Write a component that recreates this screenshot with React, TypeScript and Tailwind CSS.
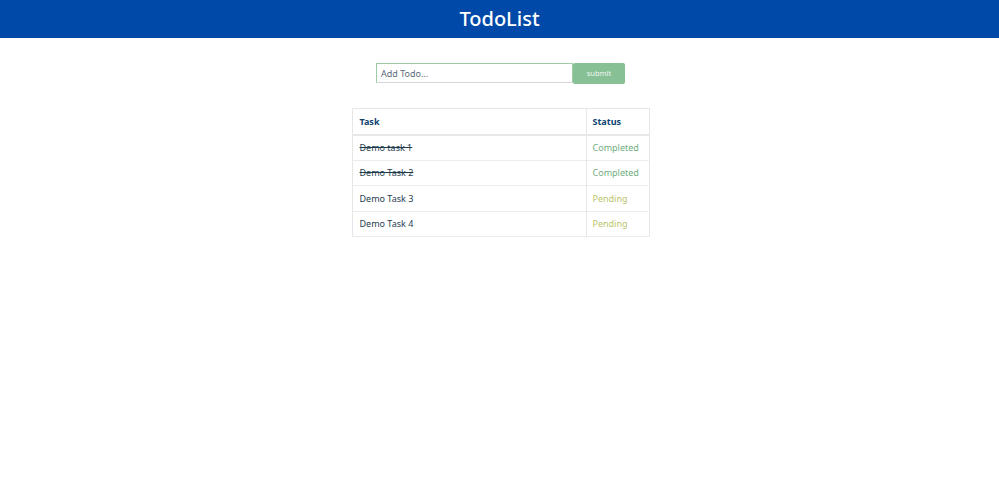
import React, { useState } from "react";

type Todo = { id: number; task: string; done: boolean };

const initialTodos: Todo[] = [
  { id: 1, task: "Demo task 1", done: true },
  { id: 2, task: "Demo Task 2", done: true },
  { id: 3, task: "Demo Task 3", done: false },
  { id: 4, task: "Demo Task 4", done: false },
];

export default function App() {
  const [todos, setTodos] = useState<Todo[]>(initialTodos);
  const [text, setText] = useState("");

  const handleSubmit = (e: React.FormEvent) => {
    e.preventDefault();
    if (!text.trim()) return;
    setTodos([...todos, { id: Date.now(), task: text, done: false }]);
    setText("");
  };

  return (
    <div className="min-h-screen bg-white font-['Noto_Sans',sans-serif]">
      {/* Header */}
      <div className="h-[38px] bg-[#0049a8] flex items-center justify-center">
        <h1 className="text-[20px] font-medium text-white leading-none">TodoList</h1>
      </div>

      {/* Form */}
      <form onSubmit={handleSubmit} className="flex justify-center mt-[25px] pl-[2px]">
        <input
          value={text}
          onChange={(e) => setText(e.target.value)}
          placeholder="Add Todo..."
          className="w-[197px] h-[20px] px-[4px] text-[9px] text-[#34495e] placeholder:text-[#5a6a78] border border-[#9ccba6] border-b-[#d6d6d6] outline-none"
        />
        <button
          type="submit"
          className="w-[52px] h-[21px] bg-[#88c096] text-[#eef6f0] text-[7.5px] rounded-[2px]"
        >
          submit
        </button>
      </form>

      {/* Table */}
      <div className="flex justify-center mt-[24px] pl-[2px]">
        <table className="w-[298px] border border-[#e6e6e6] border-collapse text-[9px]">
          <thead>
            <tr className="h-[26px] border-b-2 border-[#e8e8e8]">
              <th className="text-left pl-[7px] font-bold text-[#0d4470] border-r border-[#e6e6e6]">Task</th>
              <th className="text-left pl-[6px] w-[63px] font-bold text-[#0d4470]">Status</th>
            </tr>
          </thead>
          <tbody>
            {todos.map((todo) => (
              <tr key={todo.id} className="h-[25.5px] border-b border-[#ececec]">
                <td
                  className={`pl-[7px] text-[#1f3d4f] border-r border-[#e6e6e6] ${todo.done ? "line-through" : ""}`}
                >
                  {todo.task}
                </td>
                <td className={`pl-[6px] ${todo.done ? "text-[#6fae80]" : "text-[#bcc46a]"}`}>
                  {todo.done ? "Completed" : "Pending"}
                </td>
              </tr>
            ))}
          </tbody>
        </table>
      </div>
    </div>
  );
}
